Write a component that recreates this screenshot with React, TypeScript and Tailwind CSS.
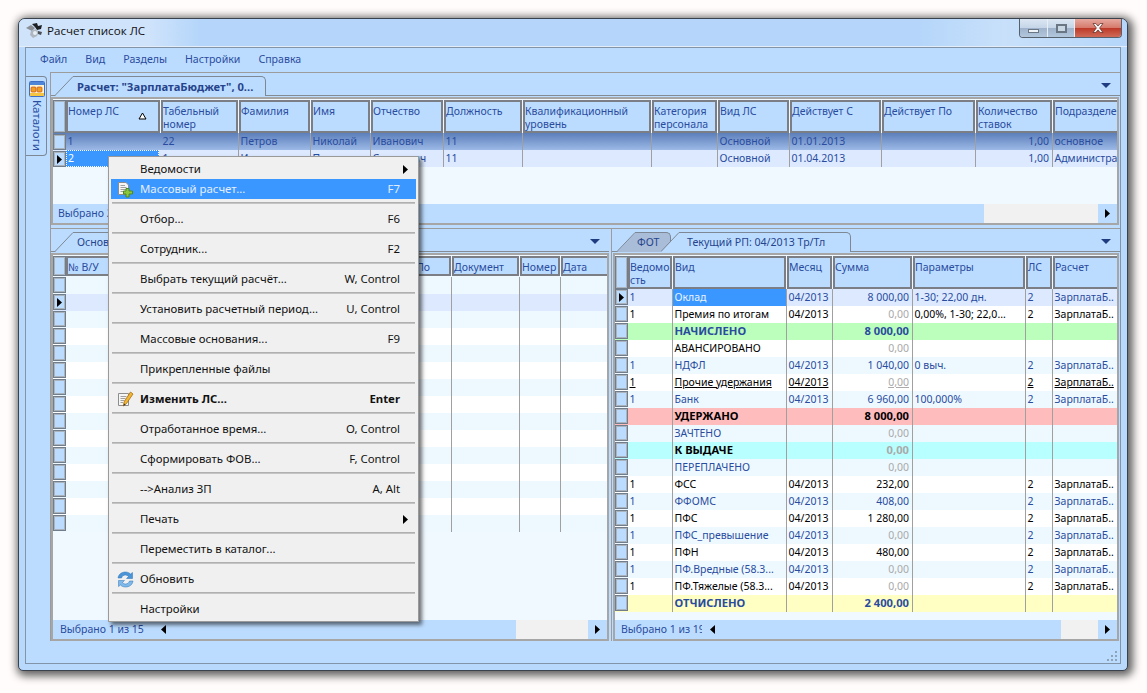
import type { ReactNode } from "react"

const TOP_COLS = "grid grid-cols-[13px_95px_78px_72px_60px_73px_79px_129px_66px_72px_92px_94px_77px_120px]"
const LEFT_COLS = "grid grid-cols-[13px_134px_90px_70px_92px_68px_41px_80px]"
const RIGHT_COLS = "grid grid-cols-[13px_45px_114px_46px_80px_113px_27px_100px]"

const BLUE = "text-[#2a4c9e]"

function Arrow({ dir = "right", className = "" }: { dir?: "right" | "left" | "down"; className?: string }) {
  const points = dir === "right" ? "0,0 5,4.5 0,9" : dir === "left" ? "5,0 0,4.5 5,9" : "0,0 10,0 5,5"
  return (
    <svg width={dir === "down" ? 10 : 5} height={dir === "down" ? 5 : 9} className={`shrink-0 ${className}`}>
      <polygon points={points} />
    </svg>
  )
}

function TitleIcon() {
  return (
    <svg width="17" height="16" viewBox="0 0 17 16" className="shrink-0">
      <path d="M0 5 L5 2 L9 5 L6 8 Z" fill="#8a8f96" />
      <path d="M6 1 L11 0 L12 3 L16 2 L15 6 L11 7 L9 4 Z" fill="#1c1f24" />
      <path d="M5 8 L10 6 L13 9 L11 13 L7 15 L4 12 Z" fill="#aeb6c0" />
      <circle cx="9" cy="10" r="2" fill="#e8eef5" />
      <path d="M12 8 L16 9 L15 12 L12 11 Z" fill="#4a5058" />
    </svg>
  )
}

function CatalogIcon() {
  return (
    <svg width="16" height="16" viewBox="0 0 16 16">
      <rect x="0.5" y="0.5" width="15" height="15" rx="1" fill="#fff6d0" stroke="#3f6fc4" />
      <rect x="1" y="1" width="14" height="3" fill="#4f86d8" />
      <rect x="1" y="12" width="14" height="3" fill="#f5c542" />
      <rect x="2" y="6" width="5" height="5" rx="1" fill="#f0a020" stroke="#c84a20" strokeWidth="0.7" />
      <rect x="8" y="6" width="5" height="5" rx="1" fill="#f0a020" stroke="#c84a20" strokeWidth="0.7" />
    </svg>
  )
}

function DocPlusIcon() {
  return (
    <svg width="17" height="17" viewBox="0 0 17 17">
      <path d="M1.5 1.5 H9 L11.5 4 V13.5 H1.5 Z" fill="#f6f6f4" stroke="#8d8d8d" />
      <path d="M3.5 4.5 H8 M3.5 6.5 H9.5 M3.5 8.5 H9.5 M3.5 10.5 H7" stroke="#a0a0a0" />
      <path d="M9 7.5 H12 V10 H15.5 V13 H12 V16 H9 V13 H6.5 V10 H9 Z" fill="#8cc63f" stroke="#4d8a1c" />
    </svg>
  )
}

function DocPencilIcon() {
  return (
    <svg width="17" height="17" viewBox="0 0 17 17">
      <path d="M1.5 2.5 H11.5 V14.5 H1.5 Z" fill="#f6f6f4" stroke="#8d8d8d" />
      <path d="M3.5 5.5 H9.5 M3.5 7.5 H8.5 M3.5 9.5 H7.5 M3.5 11.5 H6" stroke="#a0a0a0" />
      <path d="M13.5 1 L16 3 L9.5 12.5 L6.5 15 L7 11 Z" fill="#f2b632" stroke="#a86c10" strokeWidth="0.8" />
      <path d="M6.5 15 L7 12.5 L8.5 13.5 Z" fill="#333" />
    </svg>
  )
}

function RefreshIcon() {
  return (
    <svg width="17" height="17" viewBox="0 0 17 17">
      <path d="M1 7 C1.5 3 5 1 8.5 1 C11 1 12.5 2 13.5 3 L15.5 1.5 V7.5 H9.5 L11.5 5.5 C10.5 4.5 9.5 4 8.5 4 C6.5 4 5 5.2 4.5 7 Z" fill="#4a94d8" stroke="#2f72b4" strokeWidth="0.5" />
      <path d="M16 10 C15.5 14 12 16 8.5 16 C6 16 4.5 15 3.5 14 L1.5 15.5 V9.5 H7.5 L5.5 11.5 C6.5 12.5 7.5 13 8.5 13 C10.5 13 12 11.8 12.5 10 Z" fill="#7fb9ea" stroke="#2f72b4" strokeWidth="0.5" />
    </svg>
  )
}

function Tab({ label, width, active = true, textClass = "pl-[2px]" }: { label: string; width: number; active?: boolean; textClass?: string }) {
  return (
    <div className="flex items-end -mb-px h-[20px] relative">
      <svg width="20" height="20" className="shrink-0">
        <path d="M0 20 L18 1 H20 V20 Z" fill={active ? "#bcdcff" : "#a9bcd8"} />
        <path d="M0 19.5 L18 0.5 H20" fill="none" stroke="#7d8894" />
      </svg>
      <div
        className={`h-[20px] flex items-center border-t border-r border-[#7d8894] rounded-tr-[5px] text-[#26448c] whitespace-nowrap overflow-hidden ${active ? "bg-[#bcdcff]" : "bg-[#a9bcd8]"} ${textClass}`}
        style={{ width }}
      >
        {label}
      </div>
    </div>
  )
}

function Selector({ current = false, className = "h-[16px]" }: { current?: boolean; className?: string }) {
  return (
    <div className={`w-[13px] border border-[#717d8a] bg-[#bcdcff] flex items-center justify-center outline outline-[#a9b4bf] -outline-offset-2 ${className}`}>
      {current && <Arrow className="fill-black" />}
    </div>
  )
}

function HeaderCell({ children, height }: { children?: ReactNode; height: string }) {
  return (
    <div className={`mr-px border-2 border-[#7b7f85] bg-[#bcdcff] pt-[3px] leading-[13px] overflow-hidden ${BLUE} ${height}`}>
      {children}
    </div>
  )
}

function Cell({ children, right = false, className = "" }: { children?: ReactNode; right?: boolean; className?: string }) {
  return (
    <div className={`h-[17px] pb-px border-r border-[#a0a0a0] flex items-center whitespace-nowrap overflow-hidden ${right ? "justify-end pr-[3px]" : "pl-[1.5px]"} ${className}`}>
      {children}
    </div>
  )
}

function StatusBar({ text, textClass, hatchClass, leftArrow = true }: { text: string; textClass: string; hatchClass: string; leftArrow?: boolean }) {
  return (
    <div className={`h-[19px] shrink-0 bg-[#bcdcff] flex items-center ${BLUE}`}>
      <div className={`whitespace-nowrap overflow-hidden ${textClass}`}>{text}</div>
      {leftArrow && <Arrow dir="left" className="fill-black ml-[8px]" />}
      <div className="flex-1" />
      <div className={`h-[19px] bg-[#f1f1f1] ${hatchClass}`} />
      <Arrow className="fill-black mx-[7px]" />
    </div>
  )
}

function Panel({ children, className = "" }: { children: ReactNode; className?: string }) {
  return <div className={`min-h-0 border-2 border-[#a6a6a6] bg-[#f0f9ff] flex flex-col pt-px overflow-hidden text-[10.5px] ${className}`}>{children}</div>
}

const topHeaders = ["Номер ЛС", "Табельный номер", "Фамилия", "Имя", "Отчество", "Должность", "Квалификационный уровень", "Категория персонала", "Вид ЛС", "Действует С", "Действует По", "Количество ставок", "Подразделение"]
const topRows = [
  ["1", "22", "Петров", "Николай", "Иванович", "11", "", "", "Основной", "01.01.2013", "", "1,00", "основное"],
  ["2", "1", "Иванов", "Петр", "Сергеевич", "11", "", "", "Основной", "01.04.2013", "", "1,00", "Административное"],
]

function TopGrid() {
  return (
    <Panel className="flex-1 mt-px mr-px">
      <div className={TOP_COLS}>
        <Selector className="h-[33px]" />
        {topHeaders.map((h, i) => (
          <HeaderCell key={h} height="h-[33px]">
            <div className="relative whitespace-normal">
              {h}
              {i === 0 && (
                <svg width="9" height="8" className="absolute left-[70px] top-[7px]">
                  <path d="M4.5 1 L8 7 H1 Z" fill="#fff" stroke="#000" />
                </svg>
              )}
            </div>
          </HeaderCell>
        ))}
      </div>
      {topRows.map((row, r) => (
        <div key={r} className={`${TOP_COLS} ${BLUE} ${r === 0 ? "bg-[linear-gradient(180deg,#5c7fbb,#9cb9e6)]" : "bg-[#dce9ff]"}`}>
          <Selector current={r === 1} className="h-[16px] mt-px" />
          {row.map((v, i) => (
            <Cell
              key={i}
              right={i === 11}
              className={
                i === 0
                  ? r === 1
                    ? "mr-[2px] border border-dotted border-white bg-[#3a97ff] text-white !pl-px"
                    : "border-r-0"
                  : i === 12
                    ? "border-r-0"
                    : ""
              }
            >
              {v}
            </Cell>
          ))}
        </div>
      ))}
      <div className="flex-1" />
      <StatusBar text="Выбрано 2 из 2" textClass="pl-[5px]" hatchClass="w-[114px]" leftArrow={false} />
    </Panel>
  )
}

const leftHeaders = ["№ В/У", "", "", "Действует По", "Документ", "Номер", "Дата"]

function LeftGrid() {
  const rows = Array.from({ length: 15 }, (_, i) => i)
  return (
    <Panel className="flex-1 mt-px">
      <div className={LEFT_COLS}>
        <Selector className="h-[20px]" />
        {leftHeaders.map((h, i) => (
          <HeaderCell key={i} height="h-[20px]">
            {h}
          </HeaderCell>
        ))}
      </div>
      <div className="h-px shrink-0" />
      {rows.map((i) => (
        <div key={i} className={`${LEFT_COLS} ${i === 1 ? "bg-[#dce9ff]" : i % 2 === 0 ? "bg-[#eef9ff]" : "bg-white"}`}>
          <Selector current={i === 1} className="h-[16px] mb-px" />
          <Cell />
          <Cell />
          <Cell />
          <Cell />
          <Cell />
          <Cell />
          <Cell className="border-r-0" />
        </div>
      ))}
      <div className="flex-1" />
      <StatusBar text="Выбрано 1 из 15" textClass="pl-[7px] w-[100px]" hatchClass="w-[72px]" />
    </Panel>
  )
}

type Tone = "current" | "white" | "tint" | "green" | "red" | "cyan" | "yellow"

const toneClass: Record<Tone, string> = {
  current: `bg-[#dce9ff] ${BLUE}`,
  white: "bg-white text-black",
  tint: `bg-[#eef9ff] ${BLUE}`,
  green: `bg-[#bcffbc] ${BLUE} font-bold text-[11.2px]`,
  red: "bg-[#ffbcbc] text-black font-bold text-[11.2px]",
  cyan: "bg-[#b8ffff] text-black font-bold text-[11.2px]",
  yellow: `bg-[#ffffc4] ${BLUE} font-bold text-[11.2px]`,
}

const Z = "ЗарплатаБ.."
const M = "04/2013"

const rightRows: { tone: Tone; cells: string[]; underline?: boolean }[] = [
  { tone: "current", cells: ["1", "Оклад", M, "8 000,00", "1-30; 22,00 дн.", "2", Z] },
  { tone: "white", cells: ["1", "Премия по итогам", M, "0,00", "0,00%, 1-30; 22,0...", "2", Z] },
  { tone: "green", cells: ["", "НАЧИСЛЕНО", "", "8 000,00", "", "", ""] },
  { tone: "white", cells: ["", "АВАНСИРОВАНО", "", "0,00", "", "", ""] },
  { tone: "tint", cells: ["1", "НДФЛ", M, "1 040,00", "0 выч.", "2", Z] },
  { tone: "white", cells: ["1", "Прочие удержания", M, "0,00", "", "2", Z], underline: true },
  { tone: "tint", cells: ["1", "Банк", M, "6 960,00", "100,000%", "2", Z] },
  { tone: "red", cells: ["", "УДЕРЖАНО", "", "8 000,00", "", "", ""] },
  { tone: "tint", cells: ["", "ЗАЧТЕНО", "", "0,00", "", "", ""] },
  { tone: "cyan", cells: ["", "К ВЫДАЧЕ", "", "0,00", "", "", ""] },
  { tone: "tint", cells: ["", "ПЕРЕПЛАЧЕНО", "", "0,00", "", "", ""] },
  { tone: "white", cells: ["1", "ФСС", M, "232,00", "", "2", Z] },
  { tone: "tint", cells: ["1", "ФФОМС", M, "408,00", "", "2", Z] },
  { tone: "white", cells: ["1", "ПФС", M, "1 280,00", "", "2", Z] },
  { tone: "tint", cells: ["1", "ПФС_превышение", M, "0,00", "", "2", Z] },
  { tone: "white", cells: ["1", "ПФН", M, "480,00", "", "2", Z] },
  { tone: "tint", cells: ["1", "ПФ.Вредные (58.3...", M, "0,00", "", "2", Z] },
  { tone: "white", cells: ["1", "ПФ.Тяжелые (58.3...", M, "0,00", "", "2", Z] },
  { tone: "yellow", cells: ["", "ОТЧИСЛЕНО", "", "2 400,00", "", "", ""] },
]

const rightHeaders = ["Ведомо\u200Bсть", "Вид", "Месяц", "Сумма", "Параметры", "ЛС", "Расчет"]

function RightGrid() {
  return (
    <Panel className="flex-1 mt-px ml-px mr-px">
      <div className={RIGHT_COLS}>
        <Selector className="h-[33px]" />
        {rightHeaders.map((h) => (
          <HeaderCell key={h} height="h-[33px]">
            {h}
          </HeaderCell>
        ))}
      </div>
      {rightRows.map((row, r) => (
        <div key={r} className={`${RIGHT_COLS} ${toneClass[row.tone]}`}>
          <Selector current={r === 0} className="h-[16px] mb-px" />
          {row.cells.map((v, i) => {
            const gray = i === 3 && v === "0,00"
            return (
              <Cell
                key={i}
                right={i === 3}
                className={`${i === 1 && r === 0 ? "bg-[#3a97ff] text-[#eaf3ff]" : ""} ${gray ? "text-[#aaaaaa]" : ""} ${row.underline ? "underline" : ""} ${i === 6 ? "border-r-0" : ""}`}
              >
                {v}
              </Cell>
            )
          })}
        </div>
      ))}
      <div className="flex-1" />
      <StatusBar text="Выбрано 1 из 19" textClass="pl-[6px] w-[87px]" hatchClass="w-[37px]" />
    </Panel>
  )
}

type MenuEntry = { label: string; shortcut?: string; icon?: ReactNode; sub?: boolean; bold?: boolean; active?: boolean; noSep?: boolean }

const menu: MenuEntry[] = [
  { label: "Ведомости", sub: true, noSep: true },
  { label: "Массовый расчет...", shortcut: "F7", icon: <DocPlusIcon />, active: true },
  { label: "Отбор...", shortcut: "F6" },
  { label: "Сотрудник...", shortcut: "F2" },
  { label: "Выбрать текущий расчёт...", shortcut: "W, Control" },
  { label: "Установить расчетный период...", shortcut: "U, Control" },
  { label: "Массовые основания...", shortcut: "F9" },
  { label: "Прикрепленные файлы" },
  { label: "Изменить ЛС...", shortcut: "Enter", icon: <DocPencilIcon />, bold: true },
  { label: "Отработанное время...", shortcut: "O, Control" },
  { label: "Сформировать ФОВ...", shortcut: "F, Control" },
  { label: "-->Анализ ЗП", shortcut: "A, Alt" },
  { label: "Печать", sub: true },
  { label: "Переместить в каталог..." },
  { label: "Обновить", icon: <RefreshIcon /> },
  { label: "Настройки" },
]

function ContextMenu() {
  return (
    <div className="absolute left-[108px] top-[156px] w-[311px] border border-[#9a9a9a] bg-[#f0f0f0] p-[2px] shadow-[3px_3px_4px_rgba(0,0,0,0.55)] text-[#111] text-[11.4px]">
      {menu.map((m, i) => (
        <div key={m.label}>
          <div className={`h-[20px] flex items-center ${m.active ? "bg-[#3a97ff] text-[#e4eeff]" : ""} ${m.bold ? "font-bold" : ""}`}>
            <div className="w-[29px] flex justify-center shrink-0">{m.icon}</div>
            <div className="flex-1 whitespace-nowrap pb-px">{m.label}</div>
            {m.shortcut && <div className="pr-[16px] whitespace-nowrap pb-px">{m.shortcut}</div>}
            {m.sub && <Arrow className="fill-black mr-[8px]" />}
          </div>
          {i < menu.length - 1 && !m.noSep && (
            <div className="h-[10px] pt-[3px] px-[1px]">
              <div className="h-[2px] bg-[#b0b0b0] border-b border-[#c4c4c4]" />
            </div>
          )}
        </div>
      ))}
    </div>
  )
}

function WindowButtons() {
  return (
    <div className="flex h-[19px] rounded-b-[4px] border border-t-0 border-[#56616e] overflow-hidden">
      <div className="w-[28px] border-r border-[#e6eef6] bg-[linear-gradient(180deg,#dbe6f2_0%,#c6d6e8_48%,#9fb4cc_52%,#b2c6dc_100%)] flex items-end justify-center pb-[4px]">
        <div className="w-[11px] h-[4px] bg-[#eef3f8] border border-[#6b7685]" />
      </div>
      <div className="w-[27px] border-r border-[#e6eef6] bg-[linear-gradient(180deg,#dbe6f2_0%,#c6d6e8_48%,#9fb4cc_52%,#b2c6dc_100%)] flex items-center justify-center">
        <div className="w-[11px] h-[9px] border-2 border-[#6b7685] bg-[#c9d6e4]" />
      </div>
      <div className="w-[46px] bg-[linear-gradient(180deg,#e6a99f_0%,#d67a6c_48%,#bd3a28_52%,#cf6a58_100%)] flex items-center justify-center">
        <svg width="12" height="10" viewBox="0 0 12 10">
          <path d="M1 0.5 H3.8 L6 3 L8.2 0.5 H11 L7.6 5 L11 9.5 H8.2 L6 7 L3.8 9.5 H1 L4.4 5 Z" fill="#f3f3f3" stroke="#5a2a22" strokeWidth="0.7" />
        </svg>
      </div>
    </div>
  )
}

export default function App() {
  return (
    <div className="relative w-[1147px] h-[693px] overflow-hidden bg-[#fffcfb] pl-[18px] pt-[18px] font-['Noto_Sans',sans-serif] text-[10.6px] leading-none">
      {/* Window */}
      <div className="w-[1110px] h-[653px] flex flex-col rounded-t-[7px] rounded-b-[5px] border border-[#39424d] bg-[#b8d8fc] shadow-[2px_2px_9px_3px_rgba(0,0,0,0.62)]">
        {/* Title bar */}
        <div className="h-[28px] shrink-0 flex justify-between items-start rounded-t-[6px] border-b border-[#e2edf9] pl-[7px] pr-[5px] bg-[linear-gradient(90deg,#cfe3fb,#cfe3fb_130px,#b5d6fa_180px,#b5d6fa_900px,#c8e0fa_985px,#b5d6fa)]">
          <div className="flex items-center gap-[4px] h-[26px] mt-[-1px]">
            <TitleIcon />
            <span className="font-['Open_Sans',sans-serif] text-[11.6px] text-[#101010]">Расчет список ЛС</span>
          </div>
          <WindowButtons />
        </div>

        {/* Client frame */}
        <div className="flex-1 mx-[6px] mb-[6px] flex flex-col border border-[#8194a8] bg-[#bcdcff] min-h-0">
          <div className={`h-[24px] shrink-0 flex items-center gap-[18px] pl-[14px] pb-px ${BLUE}`}>
            <span>Файл</span>
            <span>Вид</span>
            <span>Разделы</span>
            <span>Настройки</span>
            <span>Справка</span>
          </div>

          <div className="h-[569px] flex shrink-0">
            {/* Side tabs */}
            <div className="w-[24px] shrink-0 pt-[4px]">
              <div className={`h-[80px] w-[21px] border border-l-0 border-[#7d8894] rounded-r-[4px] flex flex-col items-center pl-[2px] pt-[4px] gap-[3px] text-[11.5px] ${BLUE}`}>
                <CatalogIcon />
                <span className="[writing-mode:vertical-rl]">Каталоги</span>
              </div>
            </div>

            <div className="flex-1 min-w-0 flex flex-col border-t border-l border-[#9c9c9c]">
              {/* Top section */}
              <div className="h-[152px] shrink-0 flex flex-col">
                <div className="h-[23px] shrink-0 border-b border-[#858b92] flex items-end justify-between pl-[4px] pr-[9px]">
                  <Tab label={'Расчет: "ЗарплатаБюджет", 0...'} width={191} textClass="pl-[2px] font-bold text-[11.2px]" />
                  <Arrow dir="down" className="fill-[#1f3c80] mb-[7px]" />
                </div>
                <TopGrid />
              </div>

              <div className="h-[3px] shrink-0" />

              {/* Bottom section */}
              <div className="flex-1 min-h-0 flex border-t border-[#9c9c9c]">
                <div className="w-[558px] shrink-0 flex flex-col min-h-0">
                  <div className="h-[23px] shrink-0 border-b border-[#858b92] flex items-end justify-between pl-[4px] pr-[9px]">
                    <Tab label="Основания" width={150} />
                    <Arrow dir="down" className="fill-[#1f3c80] mb-[7px]" />
                  </div>
                  <LeftGrid />
                </div>
                <div className="w-[2px] shrink-0" />
                <div className="flex-1 min-w-0 flex flex-col border-l border-[#9c9c9c] min-h-0">
                  <div className="h-[23px] shrink-0 border-b border-[#858b92] flex items-end justify-between pl-[5px] pr-[9px]">
                    <div className="flex items-end">
                      <Tab label="ФОТ" width={34} active={false} textClass="" />
                      <div className="-ml-[10px]">
                        <Tab label="Текущий РП: 04/2013 Тр/Тл" width={170} textClass="pl-[6px]" />
                      </div>
                    </div>
                    <Arrow dir="down" className="fill-[#1f3c80] mb-[7px]" />
                  </div>
                  <RightGrid />
                </div>
              </div>
            </div>
          </div>

          {/* Bottom strip with resize grip */}
          <div className="flex-1 flex justify-end items-end pr-[3px] pb-[2px]">
            <svg width="10" height="10" className="fill-[#8fa3b8]">
              <rect x="8" y="0" width="2" height="2" />
              <rect x="4" y="4" width="2" height="2" />
              <rect x="8" y="4" width="2" height="2" />
              <rect x="0" y="8" width="2" height="2" />
              <rect x="4" y="8" width="2" height="2" />
              <rect x="8" y="8" width="2" height="2" />
            </svg>
          </div>
        </div>
      </div>

      <ContextMenu />
    </div>
  )
}
